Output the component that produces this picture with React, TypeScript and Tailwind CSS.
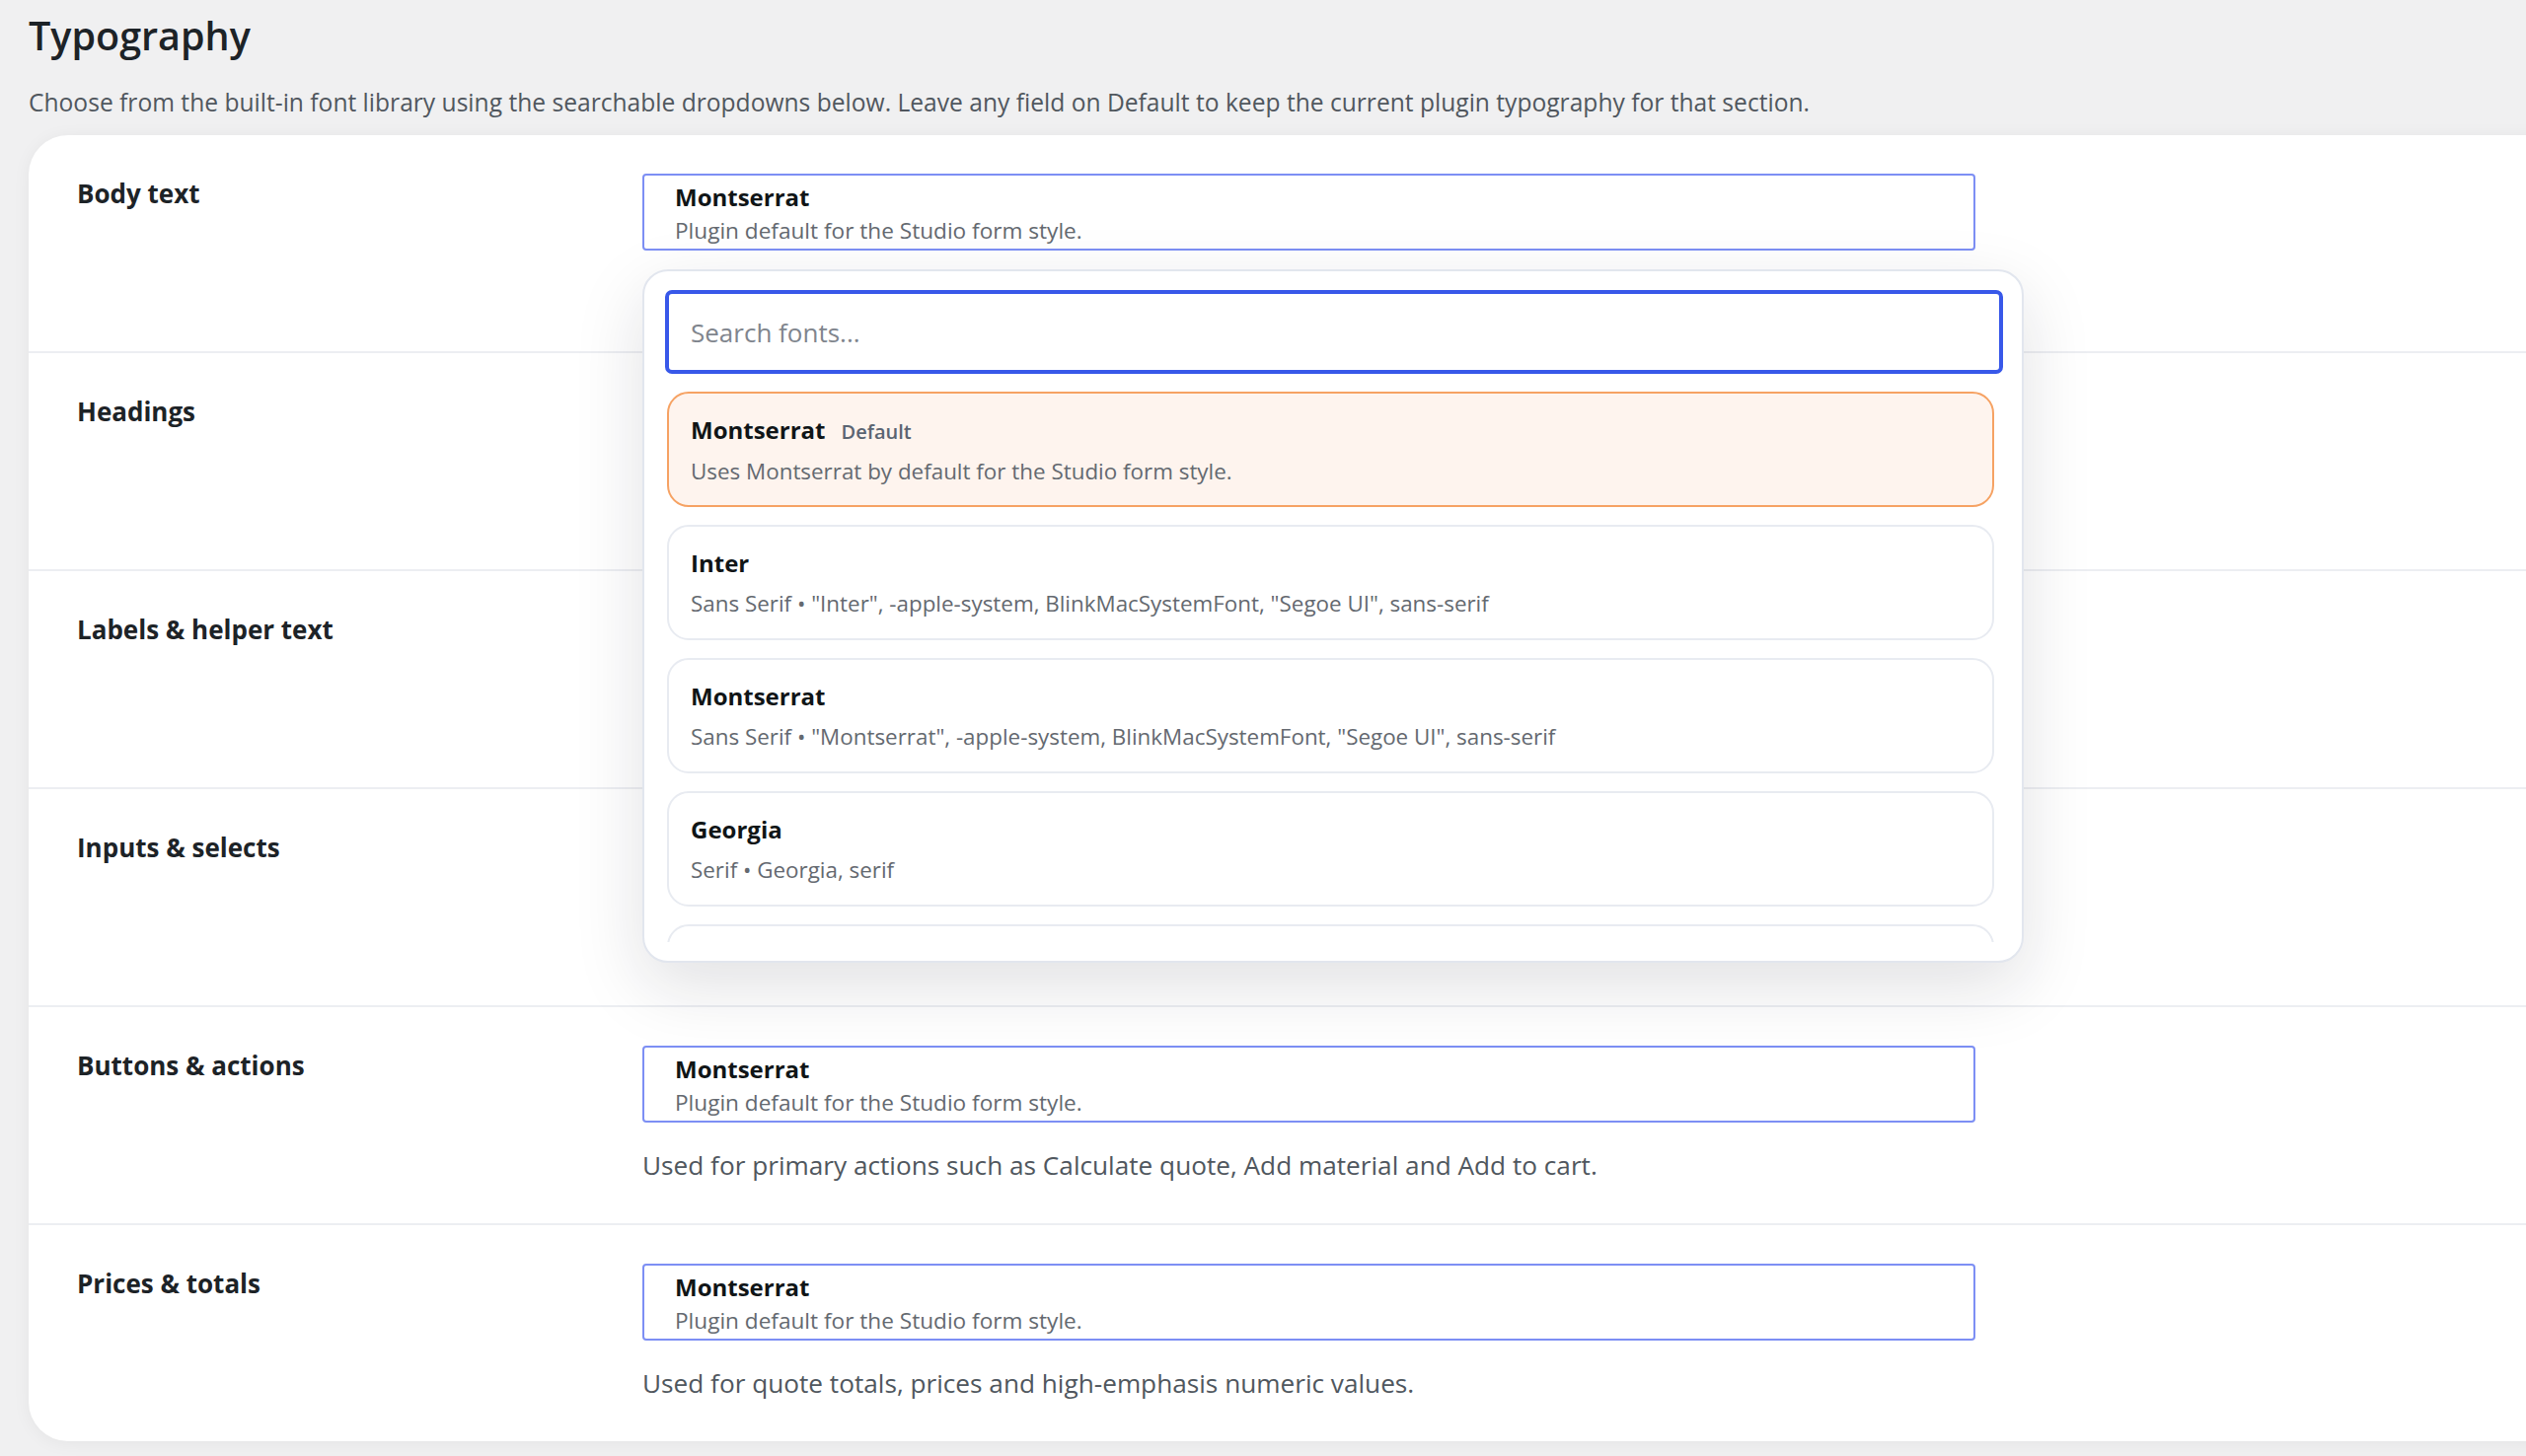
import React from "react";

type Row = {
  label: string;
  helper?: string;
};

// the first four rows sit under the open font picker, so their hints are not shown
const rows: Row[] = [
  { label: "Body text" },
  { label: "Headings" },
  { label: "Labels & helper text" },
  { label: "Inputs & selects" },
  {
    label: "Buttons & actions",
    helper: "Used for primary actions such as Calculate quote, Add material and Add to cart.",
  },
  {
    label: "Prices & totals",
    helper: "Used for quote totals, prices and high-emphasis numeric values.",
  },
];

const fonts = [
  {
    name: "Montserrat",
    badge: "Default",
    detail: "Uses Montserrat by default for the Studio form style.",
    active: true,
  },
  {
    name: "Inter",
    detail: 'Sans Serif • "Inter", -apple-system, BlinkMacSystemFont, "Segoe UI", sans-serif',
  },
  {
    name: "Montserrat",
    detail: 'Sans Serif • "Montserrat", -apple-system, BlinkMacSystemFont, "Segoe UI", sans-serif',
  },
  { name: "Georgia", detail: "Serif • Georgia, serif" },
  { name: "Arial", detail: "Sans Serif • Arial, Helvetica, sans-serif" },
];

const FontSelect = () => (
  <div className="w-[1351px] h-[78px] border-2 border-[#7d8ff4] rounded-[4px] bg-white pl-[31px] pt-[7px]">
    <p className="text-[24px] leading-[30px] font-bold text-[#101517]">Montserrat</p>
    <p className="text-[22.6px] leading-[32px] mt-[3px] text-[#646970]">Plugin default for the Studio form style.</p>
  </div>
);

const FontDropdown = () => (
  <div className="absolute left-0 top-[97px] z-20 w-[1400px] h-[703px] bg-white border-2 border-[#e2e6ee] rounded-[26px] shadow-[0_24px_70px_rgba(20,25,40,0.13)] px-[21px] pt-[19px]">
    <input
      autoFocus
      placeholder="Search fonts..."
      className="w-[1356px] h-[85px] border-4 border-[#3858e9] rounded-[7px] pl-[22px] text-[26px] text-[#1d2327] placeholder:text-[#80858d] outline-none"
    />
    <div className="mt-[18px] h-[558px] overflow-hidden pl-[2px] pr-[7px] flex flex-col gap-[18px]">
      {fonts.map((f, i) => (
        <div
          key={i}
          className={
            f.active
              ? "shrink-0 h-[117px] border-2 border-[#f6a263] bg-[#fef4ee] rounded-[22px] pl-[22px] pt-[21px]"
              : "shrink-0 h-[117px] border-2 border-[#e8ebf1] bg-white rounded-[22px] pl-[22px] pt-[21px]"
          }
        >
          <div className="flex items-baseline gap-[16px]">
            <span className="text-[24px] leading-[32px] font-bold text-[#101517]">{f.name}</span>
            {f.badge && <span className="text-[20px] font-semibold text-[#5b6472]">{f.badge}</span>}
          </div>
          <p className="mt-[8px] text-[22.4px] leading-[34px] text-[#646970]">{f.detail}</p>
        </div>
      ))}
    </div>
  </div>
);

export default function App() {
  return (
    <div
      className="w-[2560px] h-[1476px] overflow-hidden bg-[#f0f0f1] pl-[29px] pt-[12px] text-[#1d2327]"
      style={{ fontFamily: '"Open Sans", "Noto Sans", sans-serif' }}
    >
      <h1 className="text-[39.5px] leading-[48px] font-semibold text-[#1d2327]">Typography</h1>
      <p className="mt-[26px] text-[24.6px] leading-[36px] text-[#50575e]">
        Choose from the built-in font library using the searchable dropdowns below. Leave any field on Default to keep the current plugin typography for that section.
      </p>
      <div className="mt-[15px] w-[2600px] bg-white rounded-[40px] shadow-[0_2px_18px_rgba(0,0,0,0.05)]">
        {rows.map((row, i) => (
          <div
            key={row.label}
            className={
              i < rows.length - 1
                ? "h-[221px] grid grid-cols-[573px_1fr] pl-[49px] pt-[39px] border-b-2 border-[#eceef2]"
                : "h-[219px] grid grid-cols-[573px_1fr] pl-[49px] pt-[39px]"
            }
          >
            <p className="mt-[2px] text-[26px] leading-[36px] font-bold text-[#1d2327]">{row.label}</p>
            <div className="relative">
              <FontSelect />
              {row.helper && (
                <p className="mt-[25px] text-[26.2px] leading-[36px] text-[#50575e]">{row.helper}</p>
              )}
              {i === 0 && <FontDropdown />}
            </div>
          </div>
        ))}
      </div>
    </div>
  );
}
